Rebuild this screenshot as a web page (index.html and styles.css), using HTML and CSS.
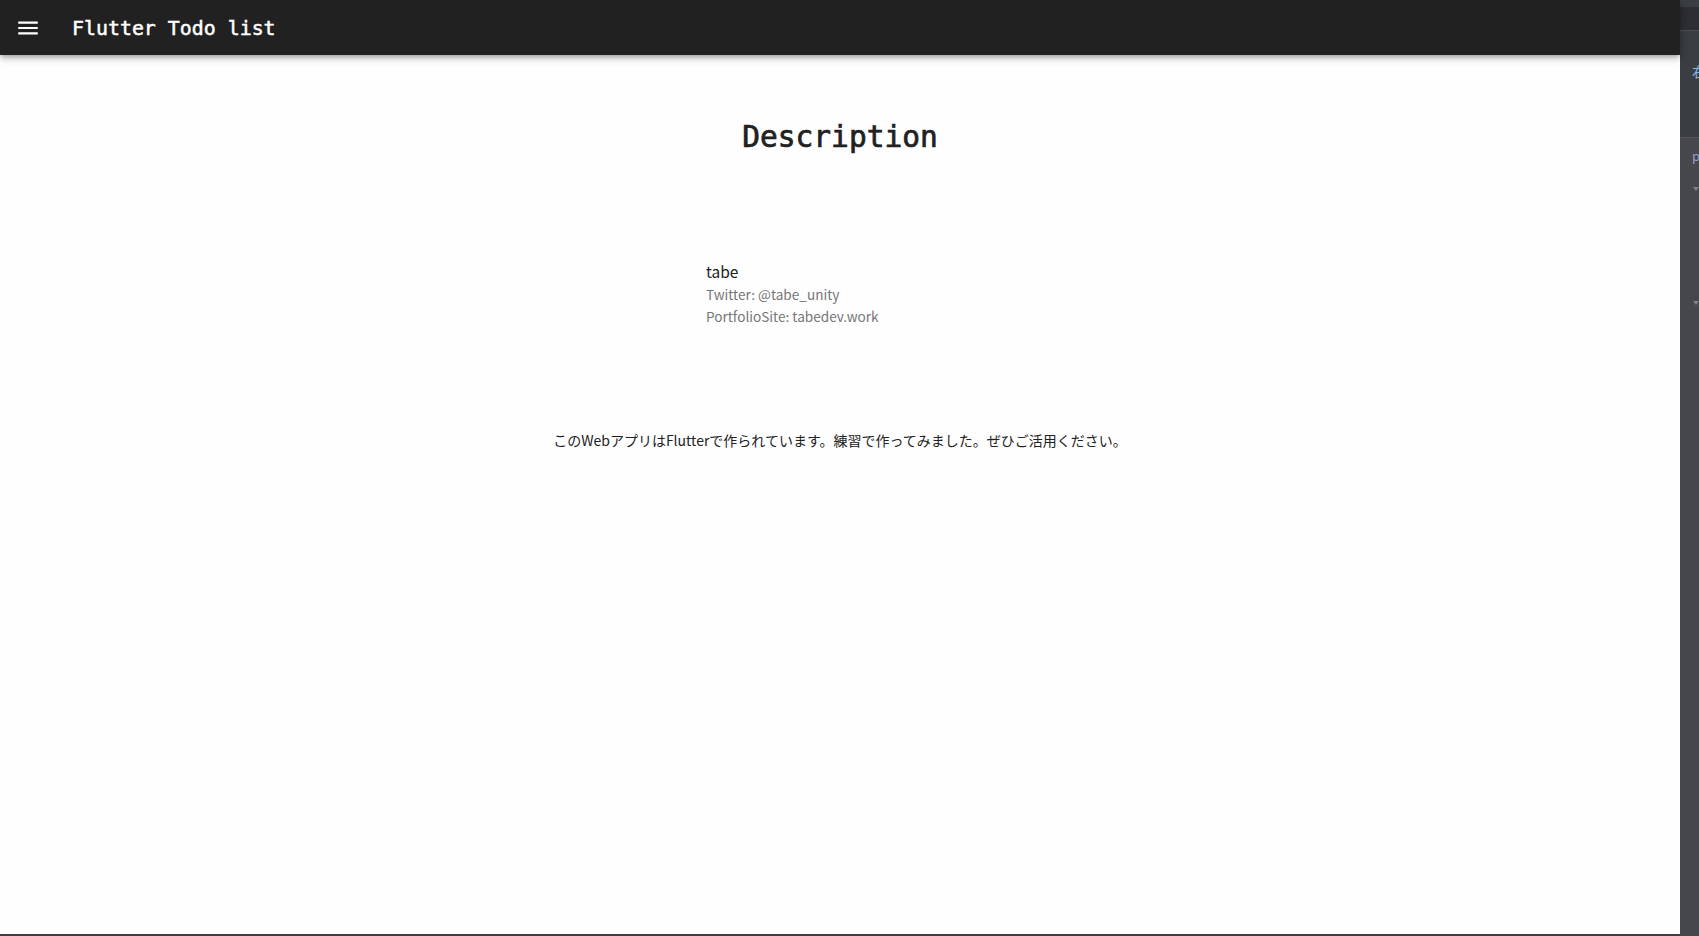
FILE: index.html
```html
<!DOCTYPE html>
<html lang="ja">
<head>
<meta charset="utf-8">
<title>Flutter Todo list</title>
<link rel="stylesheet" href="styles.css">
</head>
<body>
<div class="screen">
  <div class="app">
    <header class="appbar">
      <div class="menu-btn">
        <svg width="26" height="26" viewBox="0 0 24 24"><path fill="#ffffff" d="M3 18h18v-2H3v2zm0-5h18v-2H3v2zm0-7v2h18V6H3z"/></svg>
      </div>
      <div class="app-title">Flutter Todo list</div>
    </header>
    <main class="content">
      <h1 class="heading">Description</h1>
      <div class="tile">
        <div class="tile-title">tabe</div>
        <div class="tile-sub">Twitter: @tabe_unity</div>
        <div class="tile-sub">PortfolioSite: tabedev.work</div>
      </div>
      <p class="about">このWebアプリはFlutterで作られています。練習で作ってみました。ぜひご活用ください。</p>
    </main>
  </div>
  <aside class="side">
    <div class="side-top"></div>
    <div class="side-tabs"></div>
    <div class="side-sec1"><span class="side-glyph">右</span></div>
    <div class="side-sec2">
      <span class="side-p">p</span>
      <span class="side-tri tri1"></span>
      <span class="side-tri tri2"></span>
    </div>
  </aside>
</div>
</body>
</html>
```

FILE: styles.css
```css
html, body {
  margin: 0;
  padding: 0;
  height: 100%;
  overflow: hidden;
}
body {
  font-family: "Noto Sans CJK JP", "Noto Sans", sans-serif;
  background: #fefefe;
}
.screen {
  display: flex;
  width: 1699px;
  height: 936px;
}
.app {
  width: 1680px;
  height: 936px;
  box-sizing: border-box;
  border-bottom: 2px solid #3b3e43;
  display: flex;
  flex-direction: column;
  background: #fefefe;
}
.appbar {
  height: 55px;
  flex: none;
  background: #212121;
  display: flex;
  align-items: center;
  box-shadow: 0 2px 4px -1px rgba(0,0,0,.22), 0 4px 6px 0 rgba(0,0,0,.15), 0 1px 12px 0 rgba(0,0,0,.12);
  position: relative;
  z-index: 1;
}
.menu-btn {
  width: 55px;
  height: 55px;
  display: flex;
  align-items: center;
  justify-content: center;
}
.menu-btn svg { display: block; }
.app-title {
  margin-left: 17px;
  margin-top: 2px;
  color: #ffffff;
  font-family: "DejaVu Sans Mono", "Liberation Mono", monospace;
  font-size: 19.9px;
  line-height: 24px;
  -webkit-text-stroke: 0.5px #ffffff;
}
.content {
  flex: 1;
  display: flex;
  flex-direction: column;
  align-items: center;
}
.heading {
  margin: 64px 0 0;
  font-family: "DejaVu Sans Mono", "Liberation Mono", monospace;
  font-weight: normal;
  font-size: 29.5px;
  line-height: 36px;
  color: #212121;
  -webkit-text-stroke: 0.7px #212121;
}
.tile {
  margin-top: 104px;
  width: 300px;
  box-sizing: border-box;
  padding: 0 16px;
}
.tile-title {
  font-size: 15.5px;
  line-height: 24px;
  color: #212121;
}
.tile-sub {
  font-size: 13.6px;
  line-height: 22px;
  color: #767676;
}
.about {
  margin: 103px 0 0;
  font-size: 14px;
  line-height: 20px;
  color: #212121;
}
.side {
  width: 19px;
  height: 936px;
  flex: none;
  display: flex;
  flex-direction: column;
  overflow: hidden;
  background: #45474b;
}
.side-top {
  height: 7px;
  background: #3c3f42;
}
.side-tabs {
  height: 23px;
  background: #2c2e31;
  border-bottom: 1px solid #4b4e52;
}
.side-sec1 {
  height: 107px;
  background: #3a3d41;
  padding: 30px 0 0 12px;
  box-sizing: border-box;
  border-bottom: 1px solid #505357;
}
.side-glyph {
  display: block;
  font-size: 14px;
  line-height: 20px;
  color: #8fb4d9;
  white-space: nowrap;
}
.side-sec2 {
  flex: 1;
  padding: 9px 0 0 12px;
  display: flex;
  flex-direction: column;
}
.side-p {
  font-size: 13px;
  line-height: 18px;
  color: #9c9cd6;
}
.side-tri {
  display: block;
  width: 0;
  height: 0;
  margin-left: 1px;
  border-left: 3px solid transparent;
  border-right: 3px solid transparent;
  border-top: 4px solid #7e8185;
}
.tri1 { margin-top: 22px; }
.tri2 { margin-top: 110px; }
```
